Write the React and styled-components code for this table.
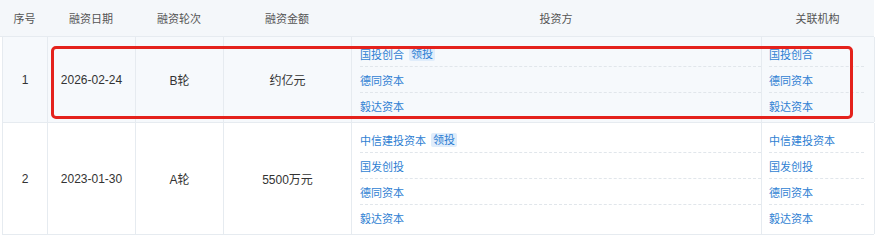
import React from 'react';
import styled, { createGlobalStyle } from 'styled-components';

const GlobalStyle = createGlobalStyle`
  body {
    margin: 0;
    background: #fff;
    font-family: 'Liberation Sans', 'Noto Sans CJK SC', sans-serif;
  }
`;

const Page = styled.div`
  padding-left: 2px;
  width: 872px;
`;

const Table = styled.div`
  position: relative;
  width: 872px;
`;

const cols = '45px 88px 88px 128px 410px 113px';

const HeadRow = styled.div`
  display: grid;
  grid-template-columns: ${cols};
  height: 36px;
  background: #f4f7fa;
  border-bottom: 1px solid #e6ebf0;
  margin-left: -2px;
  padding-left: 2px;
`;

const HeadCell = styled.div`
  display: flex;
  align-items: center;
  justify-content: center;
  font-size: 11px;
  color: #555;
`;

const Row = styled.div`
  display: grid;
  grid-template-columns: ${cols};
  background: ${p => (p.$active ? '#f6f9fc' : '#fff')};
  border-bottom: 1px solid #e6ebf0;
  border-left: 1px solid #e6ebf0;
`;

const Cell = styled.div`
  display: flex;
  align-items: center;
  justify-content: center;
  border-right: 1px solid #e6ebf0;
  font-size: ${p => (p.$num ? '12px' : '11px')};
  color: #333;
`;

const ListCell = styled.div`
  display: flex;
  flex-direction: column;
  padding: 4px ${p => p.$padRight}px 4px ${p => p.$padLeft}px;
  border-right: 1px solid #e6ebf0;
`;

const Item = styled.div`
  display: flex;
  align-items: center;
  height: 25px;
  font-size: 11px;
  color: #2f7fd3;
  border-bottom: 1px dashed #e1e6eb;
  &:last-child {
    border-bottom: none;
  }
`;

const Tag = styled.span`
  margin-left: 5px;
  padding: 0 2px;
  line-height: 14px;
  font-size: 11px;
  color: #2f7fd3;
  background: #e0edfb;
  border-radius: 2px;
`;

const Mark = styled.div`
  position: absolute;
  left: 49px;
  top: 46px;
  width: 802px;
  height: 73px;
  box-sizing: border-box;
  border: 3px solid #e4221c;
  border-radius: 5px;
  pointer-events: none;
`;

const rounds = [
  {
    no: 1,
    date: '2026-02-24',
    round: 'B轮',
    amount: '约亿元',
    investors: [
      { name: '国投创合', lead: true },
      { name: '德同资本' },
      { name: '毅达资本' }
    ],
    related: ['国投创合', '德同资本', '毅达资本']
  },
  {
    no: 2,
    date: '2023-01-30',
    round: 'A轮',
    amount: '5500万元',
    investors: [
      { name: '中信建投资本', lead: true },
      { name: '国发创投' },
      { name: '德同资本' },
      { name: '毅达资本' }
    ],
    related: ['中信建投资本', '国发创投', '德同资本', '毅达资本']
  }
];

const heads = ['序号', '融资日期', '融资轮次', '融资金额', '投资方', '关联机构'];

export default function App() {
  return (
    <Page>
      <GlobalStyle />
      <Table>
        <HeadRow>
          {heads.map(h => (
            <HeadCell key={h}>{h}</HeadCell>
          ))}
        </HeadRow>
        {rounds.map((r, i) => (
          <Row key={r.no} $active={i === 0}>
            <Cell $num>{r.no}</Cell>
            <Cell $num>{r.date}</Cell>
            <Cell $num>{r.round}</Cell>
            <Cell $num>{r.amount}</Cell>
            <ListCell $padLeft={8} $padRight={0}>
              {r.investors.map(inv => (
                <Item key={inv.name}>
                  {inv.name}
                  {inv.lead && <Tag>领投</Tag>}
                </Item>
              ))}
            </ListCell>
            <ListCell $padLeft={7} $padRight={10}>
              {r.related.map(name => (
                <Item key={name}>{name}</Item>
              ))}
            </ListCell>
          </Row>
        ))}
        <Mark />
      </Table>
    </Page>
  );
}
